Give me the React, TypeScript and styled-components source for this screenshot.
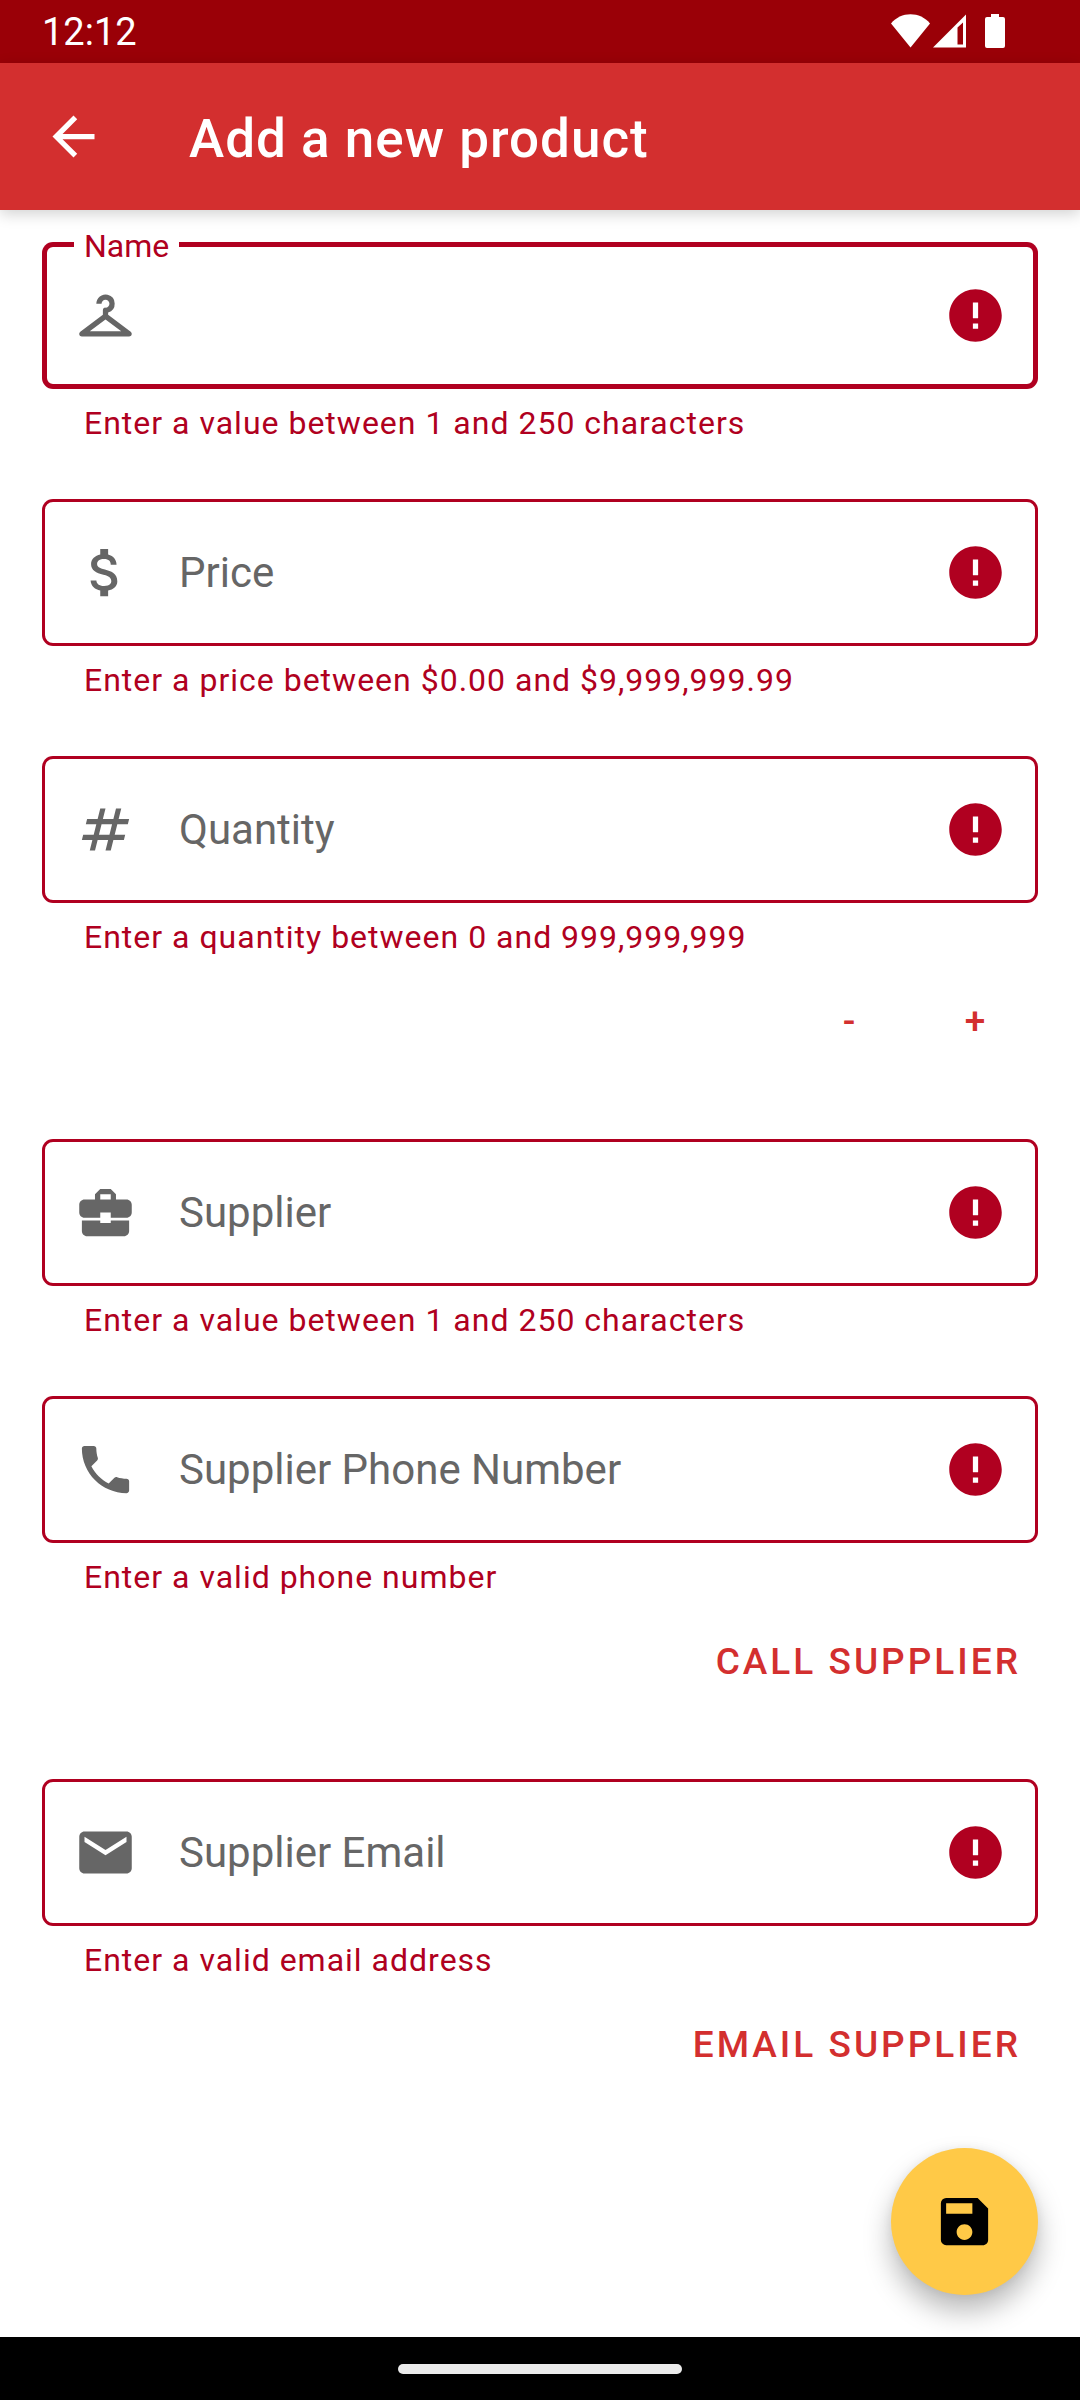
import React, { useState } from "react";
import styled, { createGlobalStyle, css } from "styled-components";
import type { IconType } from "react-icons";
import {
  MdArrowBack,
  MdAttachMoney,
  MdBusinessCenter,
  MdCheckroom,
  MdEmail,
  MdError,
  MdNumbers,
  MdPhone,
  MdSave,
} from "react-icons/md";

const color = {
  primary: "#d32f2f",
  primaryDark: "#9a0007",
  accent: "#ffc947",
  error: "#b00020",
  hint: "#666666",
  surface: "#ffffff",
};

const GlobalStyle = createGlobalStyle`
  *, *::before, *::after { box-sizing: border-box; }
  body {
    margin: 0;
    background: ${color.surface};
    font-family: Roboto, "Liberation Sans", sans-serif;
  }
  button, input { font: inherit; }
`;

const Screen = styled.div`
  display: flex;
  flex-direction: column;
  min-height: 100vh;
`;

const StatusBar = styled.div`
  display: flex;
  align-items: center;
  justify-content: space-between;
  height: 63px;
  padding: 0 75px 0 42px;
  background: ${color.primaryDark};
  color: #fff;
  font-size: 38px;
`;

const StatusIcons = styled.div`
  display: flex;
  align-items: center;
  padding-bottom: 1px;
`;

const BatterySlot = styled.span`
  display: flex;
  margin-left: 18px;
`;

const AppBar = styled.header`
  display: flex;
  align-items: center;
  gap: 84px;
  height: 147px;
  padding: 0 42px;
  background: ${color.primary};
  color: #fff;
  box-shadow: 0 4px 14px rgba(0, 0, 0, 0.18);
`;

const BackButton = styled.button`
  display: flex;
  padding: 0;
  border: 0;
  background: none;
  color: inherit;
`;

const Title = styled.h1`
  margin: 0;
  padding-top: 4px;
  font-size: 53px;
  font-weight: 500;
  line-height: 64px;
  letter-spacing: 1px;
`;

const Form = styled.form`
  position: relative;
  flex: 1;
  padding: 32px 42px 0;
`;

const Group = styled.section`
  margin-bottom: 54px;
`;

const Box = styled.div<{ $active: boolean }>`
  position: relative;
  display: flex;
  align-items: center;
  height: 147px;
  padding: 0 31px 0 32px;
  border-radius: 11px;
  box-shadow: inset 0 0 0 ${(p) => (p.$active ? 5 : 3)}px ${color.error};
`;

const LeadingIcon = styled.span`
  display: flex;
  color: ${color.hint};
`;

const ErrorIcon = styled.span`
  display: flex;
  color: ${color.error};
`;

const Input = styled.input`
  flex: 1;
  min-width: 0;
  height: 100%;
  padding: 0 42px;
  border: 0;
  outline: 0;
  background: none;
  color: #212121;
  font-size: 42px;
`;

const Label = styled.label<{ $floating: boolean }>`
  position: absolute;
  pointer-events: none;
  ${(p) =>
    p.$floating
      ? css`
          top: -12px;
          left: 32px;
          padding: 0 10px;
          background: ${color.surface};
          color: ${color.error};
          font-size: 32px;
          line-height: 32px;
        `
      : css`
          top: 0;
          left: 137px;
          color: ${color.hint};
          font-size: 42px;
          line-height: 147px;
        `}
`;

const Helper = styled.p`
  height: 56px;
  margin: 0;
  padding: 15px 42px 0;
  color: ${color.error};
  font-size: 32px;
  line-height: 38px;
  letter-spacing: 1px;
`;

const Actions = styled.div`
  display: flex;
  justify-content: flex-end;
`;

const TextButton = styled.button`
  min-width: 126px;
  height: 126px;
  padding: 0 17px 2px;
  border: 0;
  background: none;
  color: ${color.primary};
  font-size: 37px;
  font-weight: 500;
  letter-spacing: 3px;
  text-transform: uppercase;
`;

const StepButton = styled(TextButton)`
  letter-spacing: normal;
`;

const SaveButton = styled.button`
  position: absolute;
  right: 42px;
  bottom: 42px;
  display: flex;
  align-items: center;
  justify-content: center;
  width: 147px;
  height: 147px;
  padding: 0;
  border: 0;
  border-radius: 50%;
  background: ${color.accent};
  color: #000;
  box-shadow: 0 16px 28px rgba(0, 0, 0, 0.28), 0 0 10px rgba(0, 0, 0, 0.06);
`;

const NavBar = styled.footer`
  position: relative;
  display: flex;
  align-items: center;
  justify-content: center;
  height: 63px;
  background: #000;
`;

const HomePill = styled.span`
  width: 284px;
  height: 10px;
  border-radius: 5px;
  background: #ebebeb;
`;

const ICON_SIZE = 63;

interface FieldProps {
  id: string;
  label: string;
  helper: string;
  icon: IconType;
  type?: string;
  value: string;
  active: boolean;
  onActivate: (id: string) => void;
  onChange: (id: string, value: string) => void;
  children?: React.ReactNode;
}

function Field({
  id,
  label,
  helper,
  icon: Icon,
  type = "text",
  value,
  active,
  onActivate,
  onChange,
  children,
}: FieldProps) {
  return (
    <Group>
      <Box $active={active}>
        <LeadingIcon>
          <Icon size={ICON_SIZE} />
        </LeadingIcon>
        <Input
          id={id}
          type={type}
          value={value}
          aria-invalid="true"
          aria-describedby={`${id}-helper`}
          onFocus={() => onActivate(id)}
          onChange={(e) => onChange(id, e.target.value)}
        />
        <Label htmlFor={id} $floating={active || value !== ""}>
          {label}
        </Label>
        <ErrorIcon>
          <MdError size={ICON_SIZE} />
        </ErrorIcon>
      </Box>
      <Helper id={`${id}-helper`}>{helper}</Helper>
      {children && <Actions>{children}</Actions>}
    </Group>
  );
}

function WifiIcon() {
  return (
    <svg width="39" height="34" viewBox="0 0 39 34" fill="#fff" aria-hidden="true">
      <path d="M19.500 33.500L0 9.500C5 3.500 12 0.300 19.500 0.300S34 3.500 39 9.500Z" />
    </svg>
  );
}

function SignalIcon() {
  return (
    <svg width="37" height="34" viewBox="0 0 37 34" fill="#fff" aria-hidden="true">
      <path fillRule="evenodd" d="M3 33.500L36 0.500V33.500ZM27.500 13.500V30.500H33V8.500Z" />
    </svg>
  );
}

function BatteryIcon() {
  return (
    <svg width="20" height="34" viewBox="0 0 20 34" fill="#fff" aria-hidden="true">
      <path d="M6 0H14V3H18Q20 3 20 5V32Q20 34 18 34H2Q0 34 0 32V5Q0 3 2 3H6Z" />
    </svg>
  );
}

export default function App() {
  const [active, setActive] = useState("name");
  const [values, setValues] = useState<Record<string, string>>({});

  const change = (id: string, value: string) =>
    setValues((prev) => ({ ...prev, [id]: value }));

  const step = (delta: number) =>
    change("quantity", String(Math.max(0, (Number(values.quantity) || 0) + delta)));

  const bind = (id: string) => ({
    id,
    value: values[id] ?? "",
    active: active === id,
    onActivate: setActive,
    onChange: change,
  });

  return (
    <>
      <GlobalStyle />
      <Screen>
        <StatusBar>
          <span>12:12</span>
          <StatusIcons>
            <WifiIcon />
            <SignalIcon />
            <BatterySlot>
              <BatteryIcon />
            </BatterySlot>
          </StatusIcons>
        </StatusBar>
        <AppBar>
          <BackButton type="button" aria-label="Back">
            <MdArrowBack size={ICON_SIZE} />
          </BackButton>
          <Title>Add a new product</Title>
        </AppBar>
        <Form onSubmit={(e) => e.preventDefault()}>
          <Field
            {...bind("name")}
            label="Name"
            icon={MdCheckroom}
            helper="Enter a value between 1 and 250 characters"
          />
          <Field
            {...bind("price")}
            label="Price"
            icon={MdAttachMoney}
            helper="Enter a price between $0.00 and $9,999,999.99"
          />
          <Field
            {...bind("quantity")}
            label="Quantity"
            icon={MdNumbers}
            helper="Enter a quantity between 0 and 999,999,999"
          >
            <StepButton type="button" onClick={() => step(-1)}>
              -
            </StepButton>
            <StepButton type="button" onClick={() => step(1)}>
              +
            </StepButton>
          </Field>
          <Field
            {...bind("supplier")}
            label="Supplier"
            icon={MdBusinessCenter}
            helper="Enter a value between 1 and 250 characters"
          />
          <Field
            {...bind("phone")}
            label="Supplier Phone Number"
            type="tel"
            icon={MdPhone}
            helper="Enter a valid phone number"
          >
            <TextButton type="button">Call supplier</TextButton>
          </Field>
          <Field
            {...bind("email")}
            label="Supplier Email"
            type="email"
            icon={MdEmail}
            helper="Enter a valid email address"
          >
            <TextButton type="button">Email supplier</TextButton>
          </Field>
          <SaveButton type="submit" aria-label="Save">
            <MdSave size={ICON_SIZE} />
          </SaveButton>
        </Form>
        <NavBar>
          <HomePill />
        </NavBar>
      </Screen>
    </>
  );
}
